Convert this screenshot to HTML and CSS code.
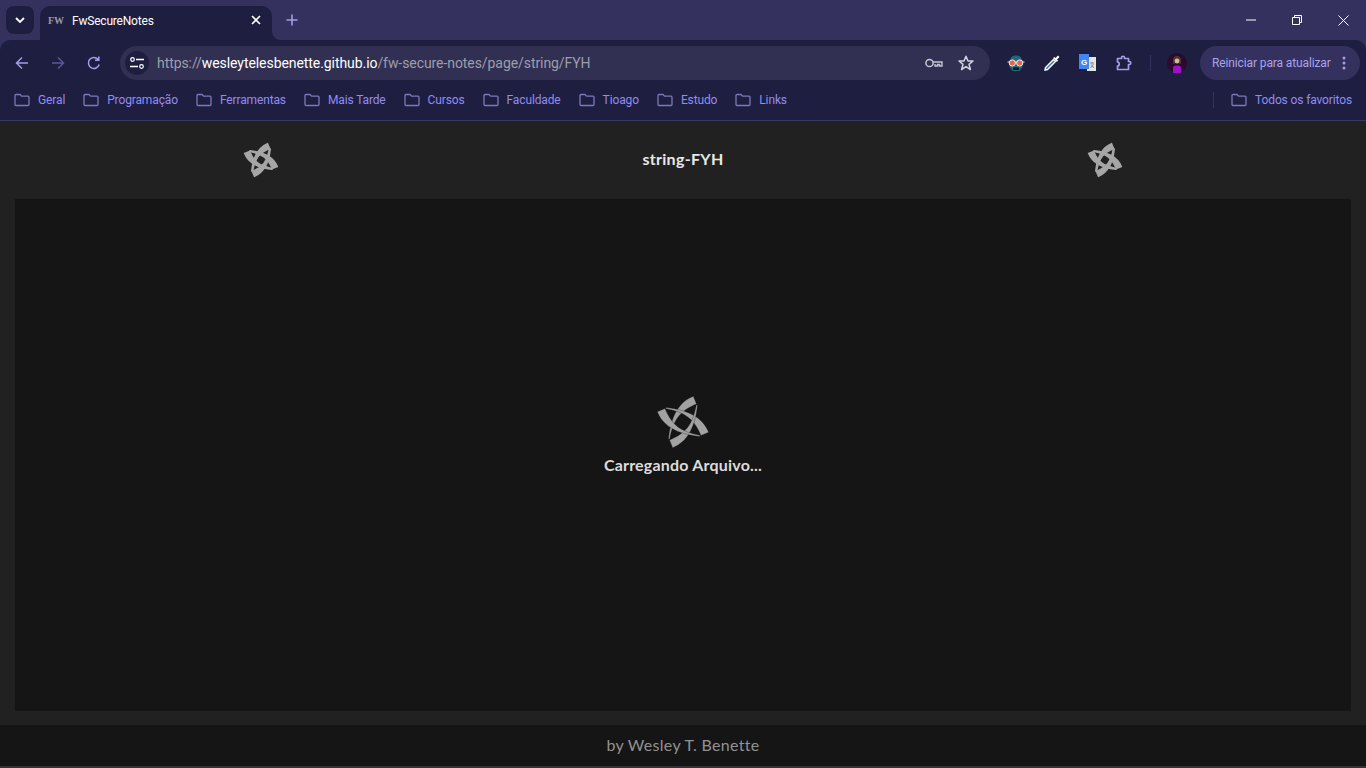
FILE: index.html
```html
<!DOCTYPE html>
<html lang="pt-BR">
<head>
<meta charset="utf-8">
<title>FwSecureNotes</title>
<link rel="stylesheet" href="styles.css">
</head>
<body>
<svg class="defs" width="0" height="0" aria-hidden="true">
  <defs>
    <symbol id="logo" viewBox="-30 -30 60 60">
      <g id="blades">
        <path id="b1" d="M10.300-25.700C-4-20-12-6-14.500 17L-13.300 17C-9.500-3-3-11 13.500-18Z"/>
        <use href="#b1" transform="rotate(90)"/>
        <use href="#b1" transform="rotate(180)"/>
        <use href="#b1" transform="rotate(270)"/>
      </g>
    </symbol>
    <symbol id="folder" viewBox="0 0 16 16">
      <path d="M1 3.500C1 2.900 1.400 2.500 2 2.500H6L7.600 4.200H14C14.600 4.200 15 4.600 15 5.200V12.500C15 13.100 14.600 13.500 14 13.500H2C1.400 13.500 1 13.100 1 12.500Z" fill="none" stroke="currentColor" stroke-width="1.300"/>
    </symbol>
  </defs>
</svg>

<header class="chrome">
  <div class="tabstrip">
    <button class="tabsearch" type="button">
      <svg width="10" height="6" viewBox="0 0 10 6"><path d="M1 1L5 5L9 1" fill="none" stroke="#fff" stroke-width="1.800"/></svg>
    </button>
    <div class="tab">
      <span class="favicon">FW</span>
      <span class="tabtitle">FwSecureNotes</span>
      <svg class="tabclose" width="10" height="10" viewBox="0 0 10 10"><path d="M1 1L9 9M9 1L1 9" stroke="#fff" stroke-width="1.600"/></svg>
    </div>
    <svg class="newtab" width="12" height="12" viewBox="0 0 12 12"><path d="M6 .5V11.500M.5 6H11.500" stroke="#a29de8" stroke-width="1.600"/></svg>
    <div class="winctl">
      <svg width="10" height="10" viewBox="0 0 10 10"><path d="M0 5H10" stroke="#fff"/></svg>
      <svg width="10" height="10" viewBox="0 0 10 10"><path d="M.5 2.500H7.500V9.500H.5ZM2.500 2.500V.5H9.500V7.500H7.500" fill="none" stroke="#fff"/></svg>
      <svg width="11" height="11" viewBox="0 0 11 11"><path d="M.5 .5L10.500 10.500M10.500 .5L.5 10.500" stroke="#fff"/></svg>
    </div>
  </div>

  <div class="toolbar">
    <div class="navs">
      <svg width="16" height="16" viewBox="0 0 16 16"><path d="M14 8H2.500M8 2.500L2.500 8L8 13.500" fill="none" stroke="#a29de8" stroke-width="1.500"/></svg>
      <svg width="16" height="16" viewBox="0 0 16 16"><path d="M2 8H13.500M8 2.500L13.500 8L8 13.500" fill="none" stroke="#5b5799" stroke-width="1.500"/></svg>
      <svg width="16" height="16" viewBox="0 0 16 16"><path d="M13.200 9.500A5.500 5.500 0 1 1 12 4.200M12.800 1.500V5.300H9" fill="none" stroke="#a29de8" stroke-width="1.500"/></svg>
    </div>
    <div class="omnibox">
      <span class="chip">
        <svg width="14" height="12" viewBox="0 0 14 12"><path d="M6 2.500H14M0 9.500H8" stroke="#fff" stroke-width="1.400"/><circle cx="2.500" cy="2.500" r="1.800" fill="none" stroke="#fff" stroke-width="1.200"/><circle cx="11.500" cy="9.500" r="1.800" fill="none" stroke="#fff" stroke-width="1.200"/></svg>
      </span>
      <span class="url">https://<b>wesleytelesbenette.github.io</b>/fw-secure-notes/page/string/FYH</span>
      <svg class="key" width="18" height="10" viewBox="0 0 18 10"><circle cx="4.500" cy="5" r="3.600" fill="none" stroke="#c8c8d2" stroke-width="1.500"/><path d="M8 4H17V8H14.500V6.500H12.500V8H10V6" fill="none" stroke="#c8c8d2" stroke-width="1.400"/></svg>
      <svg class="star" width="16" height="16" viewBox="0 0 16 16"><path d="M8 1.300L10 6H15L11 9.300L12.400 14.500L8 11.600L3.600 14.500L5 9.300L1 6H6Z" fill="none" stroke="#d2d2dc" stroke-width="1.500" stroke-linejoin="round"/></svg>
    </div>
    <div class="exts">
      <svg width="18" height="17" viewBox="0 0 18 17"><path d="M2.500 8C2.500 2 6 .5 9 .5S15.500 2 15.500 8V12L12.500 16H5.500L2.500 12Z" fill="#1f6a78"/><path d="M.5 7H17.500" stroke="#dcdcdc"/><circle cx="5.300" cy="8" r="3.100" fill="#f0604a" stroke="#ececec"/><circle cx="12.700" cy="8" r="3.100" fill="#f0604a" stroke="#ececec"/><path d="M6 12.500H12V15H6Z" fill="#14141f"/></svg>
      <svg width="16" height="16" viewBox="0 0 16 16"><path d="M9.500 4.500L1.500 12.500L1 15L3.500 14.500L11.500 6.500Z" fill="#3b6fd8" stroke="#fff" stroke-width="1.400"/><path d="M9 3L13 7L14 5.500L13 4.500L15.500 2L14 .5L11.500 3L10.500 2Z" fill="#fff"/></svg>
      <svg width="18" height="18" viewBox="0 0 18 18"><path d="M8 3H17V17H8Z" fill="#e4e4e4"/><path d="M11 9H15M13 8V9.500M11.500 14L14.500 10M12 10.500L15 14" stroke="#8a8a8a"/><path d="M0 0H10L10 15H0Z" fill="#4285f4"/><text class="gl" x="5" y="10.500" text-anchor="middle">G</text></svg>
      <svg width="16" height="16" viewBox="0 0 16 16"><path d="M1.500 3.500H5.500V2.500C5.500 .8 8.500 .8 8.500 2.500V3.500H12.500V6.500H13.500C15.200 6.500 15.200 9.500 13.500 9.500H12.500V14.500H1.500V11C3.800 11 3.800 7 1.500 7Z" fill="none" stroke="#a29de8" stroke-width="1.700" stroke-linejoin="round"/></svg>
      <span class="sep"></span>
      <svg class="avatar" width="20" height="20" viewBox="0 0 20 20"><circle cx="10" cy="10" r="10" fill="#2a0a2e"/><path d="M6 20V14.500C6 13 8 12.500 10 12.500S14 13 14 14.500V20Z" fill="#a010c8"/><path d="M6 11V7C6 4 8 3 10 3S14 4 14 7V11L12 10.500H8Z" fill="#4a3a2c"/><circle cx="10" cy="8" r="2.400" fill="#d8b89c"/></svg>
    </div>
    <div class="restart">
      <span>Reiniciar para atualizar</span>
      <svg width="4" height="14" viewBox="0 0 4 14"><circle cx="2" cy="2" r="1.500" fill="#a29de8"/><circle cx="2" cy="7" r="1.500" fill="#a29de8"/><circle cx="2" cy="12" r="1.500" fill="#a29de8"/></svg>
    </div>
  </div>

  <nav class="bookmarks">
    <a class="bm"><svg><use href="#folder"/></svg>Geral</a>
    <a class="bm"><svg><use href="#folder"/></svg>Programação</a>
    <a class="bm"><svg><use href="#folder"/></svg>Ferramentas</a>
    <a class="bm"><svg><use href="#folder"/></svg>Mais Tarde</a>
    <a class="bm"><svg><use href="#folder"/></svg>Cursos</a>
    <a class="bm"><svg><use href="#folder"/></svg>Faculdade</a>
    <a class="bm"><svg><use href="#folder"/></svg>Tioago</a>
    <a class="bm"><svg><use href="#folder"/></svg>Estudo</a>
    <a class="bm"><svg><use href="#folder"/></svg>Links</a>
    <span class="bmsep"></span>
    <a class="bm"><svg><use href="#folder"/></svg>Todos os favoritos</a>
  </nav>
</header>

<div class="page">
  <div class="pagehead">
    <svg class="logo-small"><use href="#logo"/></svg>
    <h1 class="title">string-FYH</h1>
    <svg class="logo-small"><use href="#logo"/></svg>
  </div>
  <main class="content">
    <svg class="logo-large"><use href="#logo"/></svg>
    <p class="loading">Carregando Arquivo...</p>
  </main>
  <footer class="foot">by Wesley T. Benette</footer>
</div>
</body>
</html>
```

FILE: styles.css
```css
* { box-sizing: border-box; }
html, body { margin: 0; height: 100%; overflow: hidden; }
body { background: #212121; font-family: "Roboto", "Noto Sans", sans-serif; display: flex; flex-direction: column; height: 768px; }
.defs { position: absolute; }

.chrome { flex: none; background: #34315f; }
.tabstrip { height: 40px; display: flex; align-items: flex-end; position: relative; padding-left: 6px; }
.tabsearch { width: 28px; height: 28px; margin-bottom: 6px; border: 0; padding: 0; border-radius: 8px; background: #1e1e40; display: flex; align-items: center; justify-content: center; }
.tab { width: 232px; height: 34px; margin-left: 6px; background: #1e1e40; border-radius: 10px 10px 0 0; display: flex; align-items: center; padding: 0 10px 6px 8px; position: relative; color: #fff; }
.tab::after { content: ""; position: absolute; left: 100%; bottom: 0; width: 8px; height: 8px; background: radial-gradient(circle at 100% 0, transparent 7.500px, #1e1e40 8px); }
.favicon { width: 16px; font: 700 10px "Liberation Serif", serif; color: #9a9aa8; margin-right: 8px; text-align: center; }
.tabtitle { flex: 1; font-size: 12px; letter-spacing: -.2px; padding-top: 1px; }
.tabclose { flex: none; margin-right: 1px; }
.newtab { margin: 0 0 14px 14px; }
.winctl { margin-left: auto; align-self: stretch; display: flex; align-items: center; gap: 36px; padding: 0 17px 0 0; }

.toolbar { height: 44px; background: #1e1e40; border-radius: 10px 10px 0 0; display: flex; align-items: center; padding: 2px 0 0 14px; }
.navs { display: flex; gap: 20px; width: 106px; }
.omnibox { width: 870px; height: 34px; border-radius: 17px; background: #312f52; display: flex; align-items: center; padding: 0 16px 0 5px; }
.chip { width: 24px; height: 24px; border-radius: 50%; background: #1e1e40; display: flex; align-items: center; justify-content: center; flex: none; }
.url { flex: 1; margin-left: 8px; font-size: 14px; color: #9e9eab; white-space: nowrap; letter-spacing: -.07px; }
.url b { font-weight: 400; color: #fff; }
.key { margin-right: 15px; }
.exts { display: flex; align-items: center; gap: 19px; margin-left: 17px; width: 193px; }
.sep { width: 1px; height: 16px; background: #34315f; margin: 0 -3px 0 -1px; }
.gl { font: 700 8px "Liberation Sans", sans-serif; fill: #fff; }
.restart { width: 160px; height: 34px; border-radius: 17px; background: #34315f; color: #a9a3ea; font-size: 12px; letter-spacing: -.12px; display: flex; align-items: center; justify-content: space-between; padding: 0 14px 0 12px; white-space: nowrap; }

.bookmarks { height: 37px; background: #1e1e40; border-bottom: 1px solid #3a3866; display: flex; align-items: center; padding: 0 14px 4px 14px; gap: 18px; }
.bm { display: flex; align-items: center; gap: 8px; font-size: 12px; color: #918cf5; white-space: nowrap; letter-spacing: -.13px; }
.bm svg { width: 16px; height: 16px; color: #7d78b8; flex: none; }
.bmsep { width: 1px; height: 16px; background: #34315f; margin-left: auto; margin-right: -1px; }

.page { flex: 1; display: flex; flex-direction: column; min-height: 0; }
.pagehead { height: 78px; flex: none; display: grid; grid-template-columns: repeat(3, 422px); justify-content: center; justify-items: center; align-items: center; }
.logo-small { width: 38px; height: 38px; fill: #a6a6a6; stroke: #a6a6a6; stroke-width: 2.500px; }
.title { margin: 0 0 3px; font: 700 16px "Lato", sans-serif; color: #e8e8e8; letter-spacing: .3px; }
.content { flex: 1; min-height: 0; margin: 0 15px 14px; background: #151515; display: flex; flex-direction: column; align-items: center; padding-top: 193px; }
.logo-large { width: 60px; height: 60px; fill: #a2a2a2; stroke: #151515; stroke-width: .3px; }
.loading { margin: 3px 0 0; font: 700 16px "Lato", sans-serif; color: #dcdcdc; letter-spacing: .2px; }
.foot { height: 43px; flex: none; background: #151515; border-bottom: 2px solid #333; display: flex; align-items: center; justify-content: center; font: 400 16px "Lato", sans-serif; color: #929292; letter-spacing: .3px; padding-bottom: 3px; }
```
